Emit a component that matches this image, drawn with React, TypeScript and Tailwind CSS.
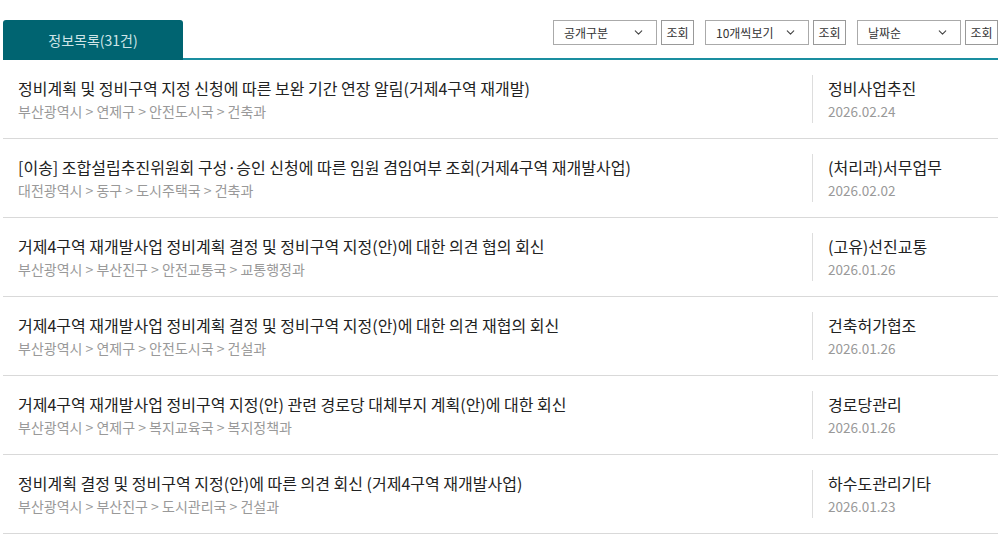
import { ChevronDown } from 'lucide-react'

const FONT = { fontFamily: '"Noto Sans CJK KR", "Noto Sans", sans-serif' }

interface Item {
  title: string
  path: string
  dept: string
  date: string
}

const ITEMS: Item[] = [
  {
    title: '정비계획 및 정비구역 지정 신청에 따른 보완 기간 연장 알림(거제4구역 재개발)',
    path: '부산광역시 > 연제구 > 안전도시국 > 건축과',
    dept: '정비사업추진',
    date: '2026.02.24',
  },
  {
    title: '[이송] 조합설립추진위원회 구성·승인 신청에 따른 임원 겸임여부 조회(거제4구역 재개발사업)',
    path: '대전광역시 > 동구 > 도시주택국 > 건축과',
    dept: '(처리과)서무업무',
    date: '2026.02.02',
  },
  {
    title: '거제4구역 재개발사업 정비계획 결정 및 정비구역 지정(안)에 대한 의견 협의 회신',
    path: '부산광역시 > 부산진구 > 안전교통국 > 교통행정과',
    dept: '(고유)선진교통',
    date: '2026.01.26',
  },
  {
    title: '거제4구역 재개발사업 정비계획 결정 및 정비구역 지정(안)에 대한 의견 재협의 회신',
    path: '부산광역시 > 연제구 > 안전도시국 > 건설과',
    dept: '건축허가협조',
    date: '2026.01.26',
  },
  {
    title: '거제4구역 재개발사업 정비구역 지정(안) 관련 경로당 대체부지 계획(안)에 대한 회신',
    path: '부산광역시 > 연제구 > 복지교육국 > 복지정책과',
    dept: '경로당관리',
    date: '2026.01.26',
  },
  {
    title: '정비계획 결정 및 정비구역 지정(안)에 따른 의견 회신 (거제4구역 재개발사업)',
    path: '부산광역시 > 부산진구 > 도시관리국 > 건설과',
    dept: '하수도관리기타',
    date: '2026.01.23',
  },
]

function SelectBox({ label }: { label: string }) {
  return (
    <div className="flex items-center justify-between w-[104px] h-[25px] border border-[#aaa] bg-white pl-[10px] pr-[11px] text-[12px] text-[#333]">
      <span>{label}</span>
      <ChevronDown className="w-[13px] h-[13px] text-[#444]" strokeWidth={2} />
    </div>
  )
}

function SearchButton() {
  return (
    <div className="flex items-center justify-center w-[33px] h-[25px] border border-[#999] bg-white text-[12px] text-[#333] ml-[4px]">
      조회
    </div>
  )
}

export default function App() {
  return (
    <div className="w-[1004px] h-[542px] bg-white overflow-hidden" style={FONT}>
      <div className="pl-[3px] pr-[6px] pt-[20px]">
        <div className="flex items-end">
          <div className="w-[180px] h-[40px] bg-[#006471] rounded-t-[3px] flex items-center justify-center text-[14px] text-[#cfe4e7]">
            정보목록(31건)
          </div>
          <div className="flex-1 flex flex-col">
            <div className="flex justify-end items-start h-[38px]">
              <div className="flex mr-[11px]">
                <SelectBox label="공개구분" />
                <SearchButton />
              </div>
              <div className="flex mr-[11px]">
                <SelectBox label="10개씩보기" />
                <SearchButton />
              </div>
              <div className="flex">
                <SelectBox label="날짜순" />
                <SearchButton />
              </div>
            </div>
            <div className="h-[2px] bg-[#1a8ea0]" />
          </div>
        </div>

        <ul>
          {ITEMS.map((item, i) => (
            <li key={i} className="h-[79px] flex items-center border-b border-[#d9d9d9]">
              <div className="flex-1 pl-[15px]">
                <p className="text-[16px] leading-[21px] text-[#222]">{item.title}</p>
                <p className="text-[14px] leading-[20px] text-[#999] mt-[2px]">{item.path}</p>
              </div>
              <div className="w-[186px] h-[48px] border-l border-[#ddd] pl-[15px] flex flex-col justify-center">
                <p className="text-[16px] leading-[21px] text-[#222]">{item.dept}</p>
                <p className="text-[13.5px] leading-[20px] text-[#999] mt-[2px]">{item.date}</p>
              </div>
            </li>
          ))}
        </ul>
      </div>
    </div>
  )
}
